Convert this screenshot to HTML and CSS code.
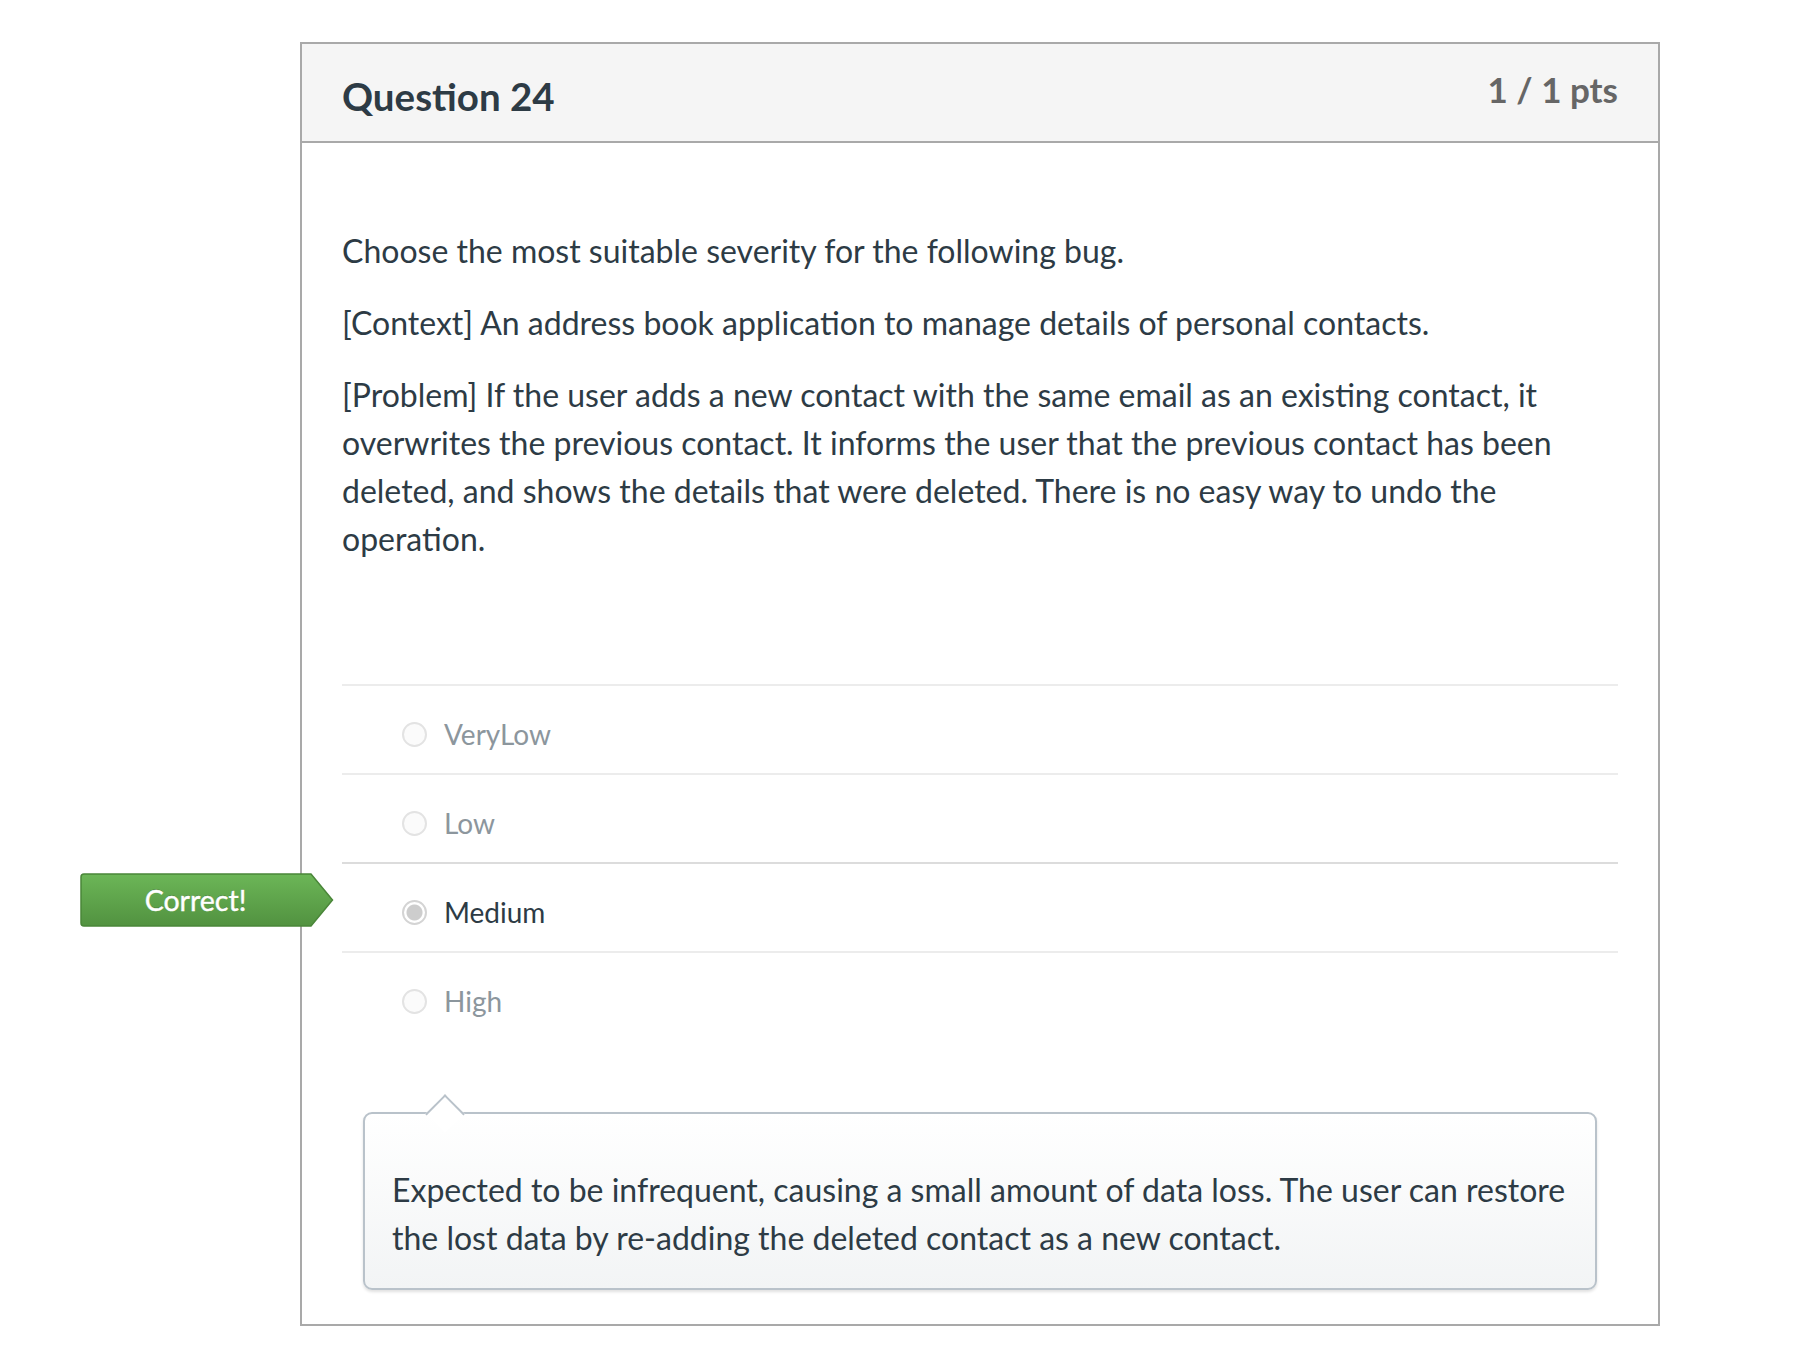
FILE: index.html
```html
<!DOCTYPE html>
<html lang="en">
<head>
<meta charset="utf-8">
<title>Question 24</title>
<link rel="stylesheet" href="styles.css">
</head>
<body>
<div class="page">
  <div class="question">
    <div class="question-header">
      <h2 class="question-title">Question 24</h2>
      <div class="question-points">1 / 1 pts</div>
    </div>
    <div class="question-body">
      <div class="question-text">
        <p>Choose the most suitable severity for the following bug.</p>
        <p>[Context] An address book application to manage details of personal contacts.</p>
        <p>[Problem] If the user adds a new contact with the same email as an existing contact, it overwrites the previous contact. It informs the user that the previous contact has been deleted, and shows the details that were deleted. There is no easy way to undo the operation.</p>
      </div>
      <div class="answers">
        <div class="answer">
          <span class="radio"></span>
          <span class="answer-label">VeryLow</span>
        </div>
        <div class="answer">
          <span class="radio"></span>
          <span class="answer-label">Low</span>
        </div>
        <div class="answer answer-selected">
          <div class="answer-arrow">
            <svg class="arrow-shape" width="254" height="54" viewBox="0 0 254 54" aria-hidden="true">
              <defs>
                <linearGradient id="greenGrad" x1="0" y1="0" x2="0" y2="1">
                  <stop offset="0" stop-color="#6cb657"/>
                  <stop offset="1" stop-color="#529240"/>
                </linearGradient>
              </defs>
              <path d="M4 1 H231 L252.5 27 L231 53 H4 Q1 53 1 50 V4 Q1 1 4 1 Z" fill="url(#greenGrad)" stroke="#4a8639" stroke-width="1.5"/>
            </svg>
            <span class="arrow-label">Correct!</span>
          </div>
          <span class="radio radio-checked"></span>
          <span class="answer-label">Medium</span>
        </div>
        <div class="answer">
          <span class="radio"></span>
          <span class="answer-label">High</span>
        </div>
      </div>
      <div class="feedback">
        <p>Expected to be infrequent, causing a small amount of data loss. The user can restore the lost data by re-adding the deleted contact as a new contact.</p>
      </div>
    </div>
  </div>
</div>
</body>
</html>
```
FILE: styles.css
```css
* {
  box-sizing: border-box;
}

html, body {
  margin: 0;
  padding: 0;
  background: #ffffff;
}

body {
  font-family: Lato, "Open Sans", "Liberation Sans", sans-serif;
  color: #2d3b45;
}

.page {
  padding: 42px 0 40px 300px;
}

.question {
  width: 1360px;
  border: 2px solid #a9a9a9;
  background: #ffffff;
}

.question-header {
  display: flex;
  justify-content: space-between;
  align-items: flex-start;
  height: 99px;
  padding: 0 40px 0 40px;
  background: #f5f5f5;
  border-bottom: 2px solid #a9a9a9;
}

.question-title {
  margin: 29px 0 0 0;
  font-size: 38.5px;
  font-weight: 700;
  line-height: 1.2;
  color: #2d3b45;
}

.question-points {
  margin-top: 24px;
  font-size: 35px;
  font-weight: 700;
  line-height: 1.2;
  color: #666666;
}

.question-body {
  padding: 84px 40px 34px 40px;
}

.question-text p {
  margin: 0 0 24px 0;
  font-size: 32px;
  line-height: 48px;
}

.answers {
  margin-top: 121px;
}

.answer {
  position: relative;
  display: flex;
  align-items: center;
  gap: 17px;
  padding: 27px 0 18px 60px;
  border-top: 2px solid #ececec;
}

.answer-selected {
  border-top-color: #dcdcdc;
}

.answer-label {
  font-size: 28px;
  line-height: 42px;
  color: #8c969d;
}

.answer-selected .answer-label {
  color: #2d3b45;
}

.radio {
  flex: none;
  width: 25px;
  height: 25px;
  border-radius: 50%;
  border: 2px solid #e3e3e3;
  background: #fbfbfb;
}

.radio-checked {
  border-color: #d4d4d4;
  background: radial-gradient(circle, #cdcdcd 0 7.5px, #ffffff 8.5px);
}

.answer-arrow {
  position: absolute;
  left: -262px;
  top: 9px;
  width: 254px;
  height: 54px;
}

.arrow-shape {
  position: absolute;
  left: 0;
  top: 0;
}

.arrow-label {
  position: relative;
  display: flex;
  justify-content: center;
  width: 231px;
  height: 54px;
  font-size: 28.5px;
  line-height: 54px;
  color: #ffffff;
  text-shadow: 0 -1px 0 rgba(0, 0, 0, 0.2);
  -webkit-text-stroke: 0.4px #ffffff;
}

.feedback {
  position: relative;
  margin: 72px 21px 0 21px;
  padding: 52px 28px 26px 27px;
  border: 2px solid #b9c2ca;
  border-radius: 9px;
  background: linear-gradient(#ffffff, #f2f4f5);
  box-shadow: 0 2px 3px rgba(0, 0, 0, 0.12);
}

.feedback::before {
  content: "";
  position: absolute;
  left: 66px;
  top: -14px;
  width: 26px;
  height: 26px;
  background: #ffffff;
  border-top: 2px solid #b9c2ca;
  border-left: 2px solid #b9c2ca;
  transform: rotate(45deg);
}

.feedback p {
  margin: 0;
  font-size: 32px;
  line-height: 48px;
  color: #2d3b45;
}
```
